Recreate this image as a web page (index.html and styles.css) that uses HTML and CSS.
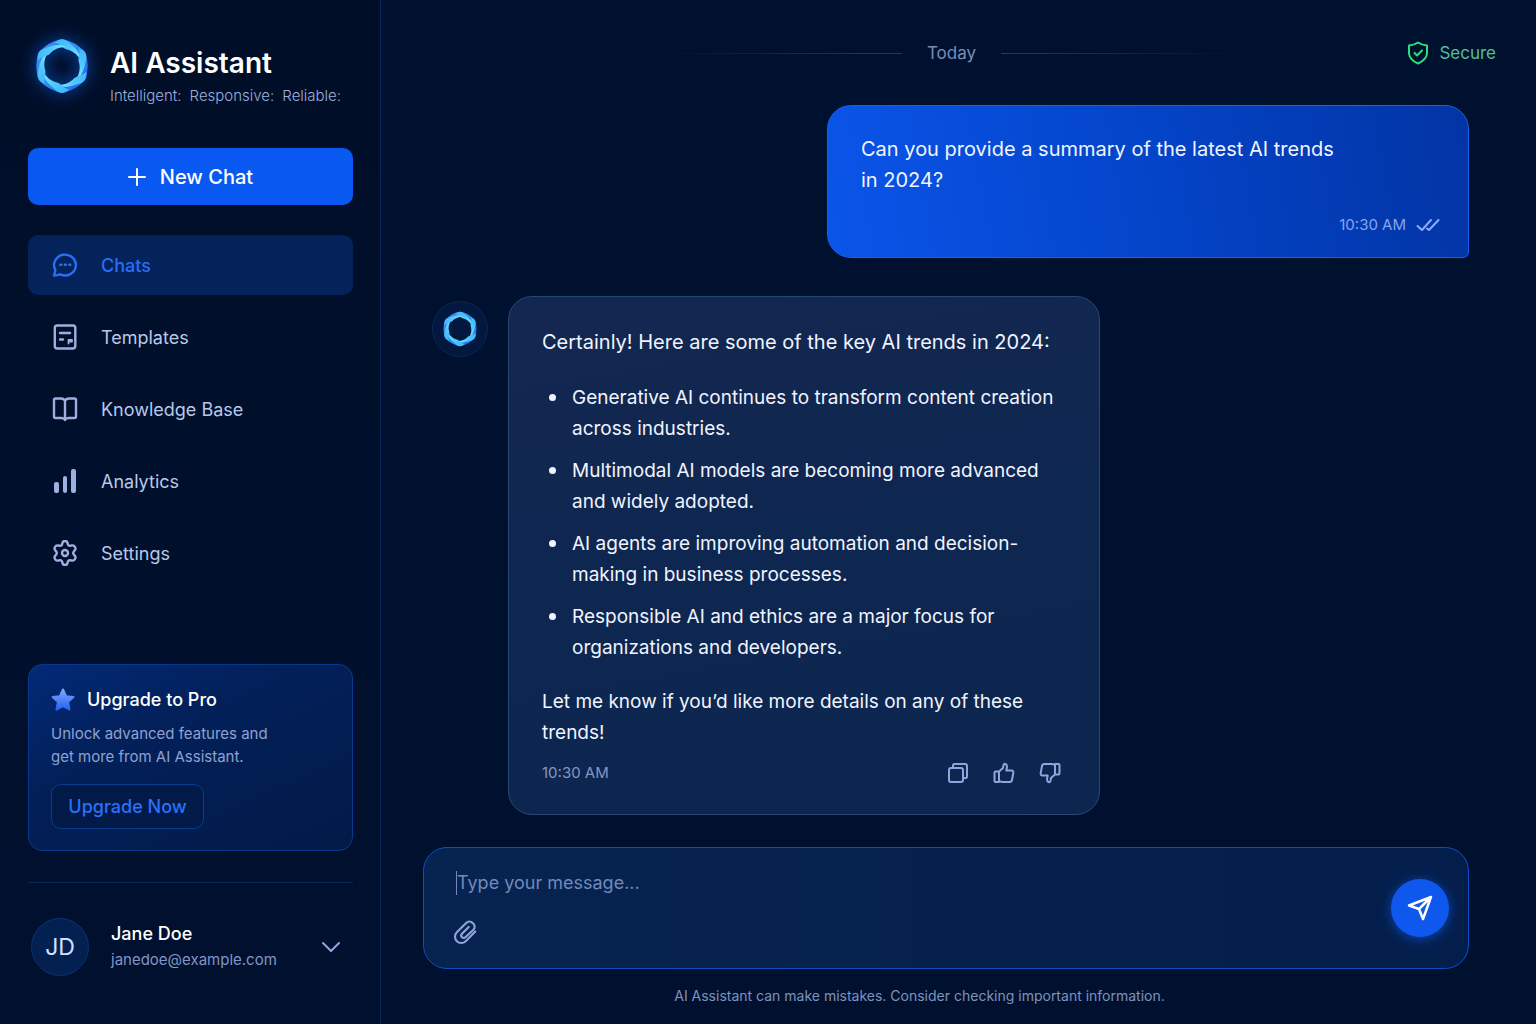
FILE: index.html
```html
<!DOCTYPE html>
<html lang="en">
<head>
  <meta charset="UTF-8" />
  <meta name="viewport" content="width=device-width, initial-scale=1" />
  <title>AI Assistant</title>
  <link rel="stylesheet" href="styles.css">
</head>
<body>

<!-- shared logo ring -->
<svg class="defs" width="0" height="0" aria-hidden="true">
  <defs>
    <linearGradient id="ringBase" x1="0" y1="0" x2="1" y2="1">
      <stop offset="0" stop-color="#3a86f8" />
      <stop offset="0.45" stop-color="#2f8ef4" />
      <stop offset="1" stop-color="#2c62f0" />
    </linearGradient>
    <linearGradient id="ringTwist" x1="0" y1="0" x2="1" y2="1">
      <stop offset="0" stop-color="#3fb4fa" />
      <stop offset="0.5" stop-color="#4fc8ff" />
      <stop offset="1" stop-color="#7cecff" />
    </linearGradient>
    <linearGradient id="starFill" x1="0" y1="0" x2="0" y2="1">
      <stop offset="0" stop-color="#7ea4ff" />
      <stop offset="1" stop-color="#2563f5" />
    </linearGradient>
    <symbol id="ring" viewBox="0 0 56 56">
      <path fill="none" stroke="url(#ringBase)" stroke-width="6.5" stroke-linejoin="round" d="M28 4.500Q40.200 6.800 48.400 16.200Q52.500 28 48.400 39.800Q40.200 49.200 28 51.500Q15.800 49.200 7.600 39.800Q3.500 28 7.600 16.200Q15.800 6.800 28 4.500z" />
      <path id="twist" fill="url(#ringTwist)" d="M21 4.500C25 0 31 0 35 4.500C40 9 46 13 46.500 22C43 16 38 12.500 33 11.500C29 10.500 27 6 21 4.500z" />
      <use href="#twist" transform="rotate(60 28 28)" />
      <use href="#twist" transform="rotate(120 28 28)" />
      <use href="#twist" transform="rotate(180 28 28)" />
      <use href="#twist" transform="rotate(240 28 28)" />
      <use href="#twist" transform="rotate(300 28 28)" />
    </symbol>
  </defs>
</svg>

<div class="app">
  <aside class="sidebar">
    <div class="brand">
      <svg class="brand-logo" aria-hidden="true"><use href="#ring" /></svg>
      <div>
        <h1>AI Assistant</h1>
        <p class="tagline"><span>Intelligent:</span><span>Responsive:</span><span>Reliable:</span></p>
      </div>
    </div>

    <button class="new-chat">
      <svg width="18" height="18" viewBox="0 0 18 18"><path d="M9 1v16M1 9h16" /></svg>
      New Chat
    </button>

    <nav class="menu">
      <a href="#" class="active">
        <svg viewBox="0 0 26 26" stroke-width="2.4"><path d="M2 23.500l1.400-5.500A10.900 10.400 0 1 1 8 22.300Q6 23.500 2 23.500z" /><path d="M8.300 12.700h1M12.800 12.700h1M17.300 12.700h1" /></svg>
        Chats
      </a>
      <a href="#">
        <svg viewBox="0 0 26 26" stroke-width="2.4"><rect x="2.800" y="1.500" width="20.500" height="23" rx="2.500" /><path d="M8 9h10M8 15.500h3" /><path stroke-width="1.800" d="M16.500 19.500v-3.500h3.500v1.500h-2" /></svg>
        Templates
      </a>
      <a href="#">
        <svg viewBox="0 0 26 26" stroke-width="2.4"><path d="M13 4.500Q11.500 2.500 9 2.500H3.500Q2 2.500 2 4v16.500Q2 22 3.500 22H9.500Q12 22 13 24Q14 22 16.500 22H22.500Q24 22 24 20.500V4Q24 2.500 22.500 2.500H17Q14.500 2.500 13 4.500zM13 4.500V23" /></svg>
        Knowledge Base
      </a>
      <a href="#">
        <svg viewBox="0 0 26 26" class="solid"><rect x="2" y="14" width="5" height="11" rx="2" /><rect x="11" y="8" width="4" height="17" rx="2" /><rect x="19" y="1" width="5" height="24" rx="2" /></svg>
        Analytics
      </a>
      <a href="#">
        <svg viewBox="0 0 26 26" stroke-width="2.4"><path d="M10.600 2.600Q11 1 13 1T15.400 2.600L16 4.800Q16.600 6 18 5.800L20.400 5.400Q22 5.200 23 7T23 10L21.600 11.800Q20.800 13 21.600 14.200L23 16Q24 17.300 23 19T20.400 20.600L18 20.200Q16.600 20 16 21.200L15.400 23.400Q15 25 13 25T10.600 23.400L10 21.200Q9.400 20 8 20.200L5.600 20.600Q4 20.800 3 19T3 16L4.400 14.200Q5.200 13 4.400 11.800L3 10Q2 8.700 3 7T5.600 5.400L8 5.800Q9.400 6 10 4.800z" /><circle cx="13" cy="13" r="3" /></svg>
        Settings
      </a>
    </nav>

    <section class="upgrade">
      <h2>
        <svg width="24" height="24" viewBox="0 0 24 24"><path fill="url(#starFill)" stroke="url(#starFill)" stroke-width="2" stroke-linejoin="round" d="M12 1.500l3.100 6.700 7.400.9-5.400 5 1.400 7.400L12 18l-6.500 3.500 1.400-7.400-5.400-5 7.400-.9z" /></svg>
        Upgrade to Pro
      </h2>
      <p>Unlock advanced features and<br />get more from AI Assistant.</p>
      <button class="upgrade-button">Upgrade Now</button>
    </section>

    <div class="profile">
      <div class="initials">JD</div>
      <div class="who">
        <strong>Jane Doe</strong>
        <span>janedoe@example.com</span>
      </div>
      <button class="icon-button" aria-label="Account menu">
        <svg width="20" height="12" viewBox="0 0 20 12"><path d="M2 2l8 8 8-8" /></svg>
      </button>
    </div>
  </aside>

  <main class="chat">
    <header class="topbar">
      <div class="day"><span>Today</span></div>
      <div class="secure">
        <svg width="22" height="24" viewBox="0 0 22 24"><path d="M11 1.500Q15 4.200 20 4.500V12Q20 18.500 11 22.500Q2 18.500 2 12V4.500Q7 4.200 11 1.500z" /><path d="M7.500 12l2.500 2.500 5-5" /></svg>
        Secure
      </div>
    </header>

    <div class="messages">
      <article class="bubble user">
        <p>Can you provide a summary of the latest AI trends in 2024?</p>
        <footer>
          <time>10:30 AM</time>
          <svg width="24" height="14" viewBox="0 0 24 14"><path d="M1.500 8l4.500 4L15 2M11 10.500l2 1.500L22.500 2" /></svg>
        </footer>
      </article>

      <div class="reply">
        <div class="bot"><svg aria-hidden="true"><use href="#ring" /></svg></div>
        <article class="bubble assistant">
          <p class="lead">Certainly! Here are some of the key AI trends in 2024:</p>
          <ul>
            <li>Generative AI continues to transform content creation across industries.</li>
            <li>Multimodal AI models are becoming more advanced and widely adopted.</li>
            <li>AI agents are improving automation and decision-making in business processes.</li>
            <li>Responsible AI and ethics are a major focus for organizations and developers.</li>
          </ul>
          <p>Let me know if you’d like more details on any of these trends!</p>
          <footer>
            <time>10:30 AM</time>
            <div class="actions">
              <button class="icon-button" aria-label="Copy">
                <svg width="22" height="22" viewBox="0 0 22 22"><rect x="2" y="6" width="14" height="14" rx="2" /><path d="M6 6V3.500Q6 2 7.500 2H18Q20 2 20 4V14.500Q20 16 18.500 16H16" /></svg>
              </button>
              <button class="icon-button" aria-label="Good answer">
                <svg width="22" height="22" viewBox="0 0 22 22"><path d="M6 9.500L10 6 10.500 3Q11 1.500 12.500 2T14 5L13.300 8.500H18.500Q20.700 8.500 20.300 11L19 18Q18.600 20 16.500 20H9Q7.500 20 6 18.500M2.500 9.500H6V20H2.500Q1.500 20 1.500 19V10.500Q1.500 9.500 2.500 9.500z" /></svg>
              </button>
              <button class="icon-button" aria-label="Bad answer">
                <svg width="22" height="22" viewBox="0 0 22 22"><g transform="rotate(180 11 11)"><path d="M6 9.500L10 6 10.500 3Q11 1.500 12.500 2T14 5L13.300 8.500H18.500Q20.700 8.500 20.300 11L19 18Q18.600 20 16.500 20H9Q7.500 20 6 18.500M2.500 9.500H6V20H2.500Q1.500 20 1.500 19V10.500Q1.500 9.500 2.500 9.500z" /></g></svg>
              </button>
            </div>
          </footer>
        </article>
      </div>
    </div>

    <form class="composer">
      <div class="field">
        <input type="text" placeholder="Type your message..." aria-label="Message" />
        <button type="button" class="icon-button" aria-label="Attach file">
          <svg width="25" height="25" viewBox="0 0 24 24"><path d="M21.400 11.100l-9.200 9.200a6 6 0 0 1-8.500-8.500l9.200-9.200a4 4 0 0 1 5.700 0l1 1a4 4 0 0 1 0 5.700l-7.700 7.200a2.300 2.300 0 0 1-3.300-3.300l6.500-6.500" /></svg>
        </button>
      </div>
      <button type="submit" class="send" aria-label="Send">
        <svg width="26" height="26" viewBox="0 0 26 26" stroke-width="2.5"><path d="M2 10.500L24 2 16 24 12 14z M12 14L24 2" /></svg>
      </button>
    </form>
    <p class="note">AI Assistant can make mistakes. Consider checking important information.</p>
  </main>
</div>

</body>
</html>
```
FILE: styles.css
```css
* { box-sizing: border-box; }
body {
  margin: 0;
  font-family: Inter, "Liberation Sans", sans-serif;
  background: #00102e;
  color: #f0f4ff;
}
h1, h2, p, ul { margin: 0; padding: 0; }
button, input { font-family: inherit; }
button { cursor: pointer; }
.defs { position: absolute; }
svg { fill: none; flex: none; stroke-linecap: round; stroke-linejoin: round; }

.app { display: flex; min-height: 100vh; }

/* sidebar */
.sidebar {
  width: 381px; flex: none;
  display: flex; flex-direction: column;
  padding: 36px 27px 48px 28px;
  border-right: 1px solid #06265a;
  background: linear-gradient(#000e28, #00112f);
}
.brand { display: flex; align-items: flex-start; gap: 20px; height: 72px; padding-left: 6px; }
.brand-logo {
  width: 56px; height: 56px; margin-top: 2px;
  filter: drop-shadow(0 0 8px #0b50c0);
}
h1 { margin-top: 9px; font-size: 28px; line-height: 36px; font-weight: 600; color: #fff; }
.tagline {
  display: flex; gap: 8px; margin-top: 5px;
  font-size: 15px; line-height: 20px; font-weight: 300; color: #9db0de;
}
.new-chat {
  display: flex; align-items: center; justify-content: center; gap: 14px;
  height: 57px; margin-top: 40px;
  border: none; border-radius: 10px;
  background: #0a58f2; color: #fff;
  font-size: 20px; font-weight: 500;
}
.new-chat svg { stroke: #fff; stroke-width: 2; }
.menu { display: flex; flex-direction: column; gap: 12px; margin-top: 30px; }
.menu a {
  display: flex; align-items: center; gap: 23px;
  height: 60px; padding-left: 24px;
  border-radius: 10px;
  color: #b9c8ea; text-decoration: none; font-size: 18px;
}
.menu svg { width: 26px; height: 26px; stroke: #9db0e0; }
.menu svg.solid { fill: #9db0e0; stroke: none; }
.menu .active { background: #04235a; color: #2a6df8; font-weight: 500; }
.menu .active svg { stroke: #2a6df8; }

.upgrade {
  margin-top: auto; padding: 21px 22px;
  border: 1px solid #08388c; border-radius: 14px;
  background: linear-gradient(155deg, #032a78, #02205a 35%, #021a47);
}
.upgrade h2 {
  display: flex; align-items: center; gap: 12px;
  font-size: 18px; line-height: 28px; font-weight: 500; color: #fff;
}
.upgrade p { margin-top: 8px; font-size: 15px; line-height: 23px; color: #8fa2d0; }
.upgrade-button {
  height: 45px; width: 153px; margin-top: 16px; padding: 0;
  border: 1px solid #083c8c; border-radius: 10px;
  background: #021a48; color: #2a70fa;
  font-size: 18px; font-weight: 500;
}
.profile {
  display: flex; align-items: center; gap: 22px;
  margin-top: 31px; padding: 35px 12px 0 3px;
  border-top: 1px solid #06285e;
}
.initials {
  display: flex; align-items: center; justify-content: center;
  width: 58px; height: 58px;
  border: 1px solid #0a3270; border-radius: 50%;
  background: #042050; font-size: 23px; color: #d4e0ff;
}
.who { flex: 1; }
.who strong, .who span { display: block; }
.who strong { font-size: 18px; line-height: 26px; font-weight: 500; color: #fff; }
.who span { font-size: 15px; line-height: 26px; color: #8095c6; }
.icon-button {
  display: flex; padding: 0; border: none; background: none;
}
.icon-button svg { stroke: #8fa5dc; stroke-width: 2; }

/* conversation */
.chat {
  flex: 1; min-width: 0;
  display: flex; flex-direction: column;
  padding: 39px 40px 17px 42px;
  background: #001130;
}
.topbar { position: relative; display: flex; justify-content: flex-end; }
.day {
  position: absolute; left: 0; right: 0; top: 0;
  display: flex; align-items: center; justify-content: center; gap: 25px;
  padding-right: 16px;
  font-size: 17px; line-height: 28px; color: #7c8cb8;
}
.day::before, .day::after { content: ""; width: 240px; height: 1px; }
.day::before { background: linear-gradient(90deg, transparent, #203a6a); }
.day::after { background: linear-gradient(90deg, #203a6a, transparent); }
.secure {
  display: flex; align-items: center; gap: 10px;
  font-size: 17px; line-height: 28px; color: #55bd94;
}
.secure svg { stroke: #2be07a; stroke-width: 2; }

.messages { display: flex; flex-direction: column; gap: 38px; margin: 38px 27px 32px 0; }
.bubble { border: 1px solid; font-size: 19px; line-height: 31px; }
.bubble footer { display: flex; align-items: center; }
.bubble time { font-size: 15px; line-height: 22px; }
.user {
  align-self: flex-end; width: 642px; max-width: 100%;
  padding: 28px 28px 21px 33px;
  border-color: #1660ea; border-radius: 24px 24px 6px 24px;
  background: linear-gradient(80deg, #0b55ea, #0446cc 45%, #0234a4);
}
.user p, .lead { font-size: 20px; }
.user p { max-width: 490px; }
.user footer { justify-content: flex-end; gap: 10px; margin-top: 18px; color: #86a4ec; }
.user footer svg { stroke: #8cacf8; stroke-width: 2; }
.reply { display: flex; gap: 20px; padding-left: 9px; }
.bot {
  display: flex; align-items: center; justify-content: center;
  flex: none; width: 56px; height: 56px; margin-top: 5px;
  border: 1px solid #0c2650; border-radius: 50%; background: #02183e;
}
.bot svg { width: 36px; height: 36px; }
.assistant {
  width: 592px; padding: 30px 38px 30px 33px;
  border-color: #284874; border-radius: 24px;
  background: linear-gradient(170deg, #142750, #0e2750 50%, #0c264f);
}
.assistant ul { list-style: none; margin: 24px 0 23px; padding-left: 30px; }
.assistant li + li { margin-top: 11px; }
.assistant li::before {
  content: ""; float: left;
  width: 7px; height: 7px; margin: 12px 0 0 -23px;
  border-radius: 50%; background: #f0f4ff;
}
.assistant footer { justify-content: space-between; margin-top: 14px; color: #8596c0; }
.actions { display: flex; gap: 24px; }

.composer {
  display: flex; align-items: center;
  height: 122px; margin: auto 27px 0 0;
  padding: 0 19px 0 29px;
  border: 1px solid #0c4fc4; border-radius: 24px;
  background: linear-gradient(90deg, #07234f, #041e4c);
}
.field { flex: 1; display: flex; flex-direction: column; gap: 22px; margin-bottom: 4px; }
.field input {
  width: 100%; height: 30px; padding: 0 4px;
  border: none; outline: none;
  background: linear-gradient(#7189bd, #7189bd) 3px 50% / 1px 24px no-repeat;
  color: #f0f4ff; font-size: 18px;
}
.field input::placeholder { color: #7189bd; }
.send {
  display: flex; align-items: center; justify-content: center;
  width: 58px; height: 58px; padding: 0;
  border: none; border-radius: 50%;
  background: #0f58ee; box-shadow: 0 2px 12px #0a46b8;
}
.send svg { stroke: #fff; }
.note {
  margin: 16px 0 0; padding-right: 80px;
  text-align: center; font-size: 14px; line-height: 22px; color: #7f92bc;
}
```
